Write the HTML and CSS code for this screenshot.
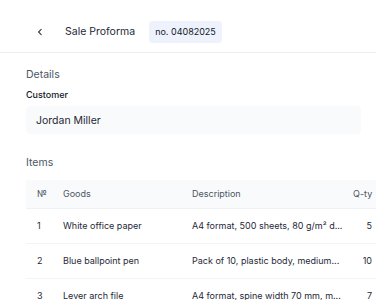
FILE: index.html
```html
<!DOCTYPE html>
<html>
<head>
<meta charset="utf-8">
<link rel="stylesheet" href="styles.css">
</head>
<body>
<header class="topbar">
  <button class="back" aria-label="Back">
    <svg width="10" height="10" viewBox="0 0 10 10"><path d="M6.2 2.3 L3.6 5 L6.2 7.7" fill="none" stroke="#374151" stroke-width="1.1" stroke-linecap="round" stroke-linejoin="round"/></svg>
  </button>
  <h1 class="title">Sale Proforma</h1>
  <span class="badge">no. 04082025</span>
</header>
<main class="content">
  <section class="section">
    <h2 class="section-title">Details</h2>
    <label class="field-label">Customer</label>
    <div class="field">Jordan Miller</div>
  </section>
  <section class="section items">
    <h2 class="section-title">Items</h2>
    <div class="table-wrap">
      <table class="table">
        <thead>
          <tr><th class="c-no">№</th><th class="c-goods">Goods</th><th class="c-desc">Description</th><th class="c-qty">Q-ty</th></tr>
        </thead>
        <tbody>
          <tr><td class="c-no">1</td><td class="c-goods">White office paper</td><td class="c-desc">A4 format, 500 sheets, 80 g/m² d...</td><td class="c-qty">5</td></tr>
          <tr><td class="c-no">2</td><td class="c-goods">Blue ballpoint pen</td><td class="c-desc">Pack of 10, plastic body, medium...</td><td class="c-qty">10</td></tr>
          <tr><td class="c-no">3</td><td class="c-goods">Lever arch file</td><td class="c-desc">A4 format, spine width 70 mm, m...</td><td class="c-qty">7</td></tr>
        </tbody>
      </table>
    </div>
  </section>
</main>
</body>
</html>
```
FILE: styles.css
```css
* { box-sizing: border-box; }
html, body { margin: 0; padding: 0; background: #fff; }
body { font-family: Inter, "Noto Sans", sans-serif; color: #1f2937; width: 376px; height: 300px; overflow: hidden; }
.topbar { display: flex; align-items: center; height: 53px; padding: 11px 0 0 35px; border-bottom: 1px solid #eceef1; }
.back { width: 10px; height: 10px; border: 0; background: none; padding: 0; display: flex; align-items: center; justify-content: center; margin-right: 20px; }
.title { font-size: 10.5px; font-weight: 400; margin: 0 14px 0 0; color: #1f2937; }
.badge { font-size: 9px; background: #eef2fd; color: #111827; padding: 0 6px; height: 22px; display: flex; align-items: center; border-radius: 4px; }
.content { padding: 0 15px 0 26px; }
.section-title { font-size: 10.5px; font-weight: 400; color: #4b5563; margin: 0; line-height: 13px; }
.section:first-child { padding-top: 15px; }
.field-label { display: block; font-size: 9px; font-weight: 500; color: #111827; margin-top: 8px; line-height: 11px; }
.field { margin-top: 6px; height: 28px; background: #f9fafb; border-radius: 4px; font-size: 10.5px; padding: 0 10px; display: flex; align-items: center; color: #1f2937; }
.items { margin-top: 22px; }
.table-wrap { margin-top: 11px; margin-right: -15px; overflow: hidden; }
.table { border-collapse: collapse; table-layout: fixed; width: 350px; font-size: 9px; white-space: nowrap; }
.table th { font-weight: 400; color: #4b5563; background: #f9fafb; height: 28px; padding: 0; text-align: left; border-bottom: 1px solid #f0f1f3; }
.table td { height: 35px; padding: 0; color: #1f2937; border-bottom: 1px solid #f3f4f6; overflow: hidden; }
.table .c-no { width: 37px; padding-left: 11px; }
.table .c-goods { width: 129px; }
.table .c-desc { width: 150px; }
.table .c-qty { width: 34px; text-align: right; padding-right: 4px; }
.table th.c-qty { text-align: left; padding-left: 11px; padding-right: 0; }
```
